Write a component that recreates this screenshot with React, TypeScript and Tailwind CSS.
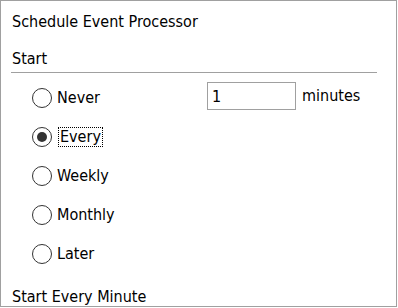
import React from 'react'

const options = ['Never', 'Every', 'Weekly', 'Monthly', 'Later']

function Radio({ checked }: { checked: boolean }) {
  return (
    <span className="flex h-[20px] w-[20px] shrink-0 items-center justify-center rounded-full border-[1.5px] border-[#333333] bg-white">
      {checked && <span className="h-[10px] w-[10px] rounded-full bg-[#333333]" />}
    </span>
  )
}

export default function App() {
  const selected = 'Every'
  return (
    <div
      className="flex h-[307px] w-[397px] flex-col overflow-hidden border border-[#a0a0a0] bg-white text-[16px] text-black"
      style={{ fontFamily: '"DejaVu Sans", sans-serif', fontStretch: 'condensed' }}
    >
      <div className="px-[11px] pt-[11px] leading-[20px]">Schedule Event Processor</div>
      <div className="px-[11px] pt-[17px] leading-[20px]">Start</div>
      <div className="ml-[10px] mr-[19px] mt-[3px] h-px shrink-0 bg-[#a0a0a0]" />
      <div className="flex pl-[31px] pt-[15px]">
        <div className="flex w-[175px] flex-col gap-[19px]">
          {options.map((o) => (
            <div key={o} className="flex h-[20px] items-center gap-[5px]">
              <Radio checked={o === selected} />
              <span
                className={
                  o === selected
                    ? 'ml-[1px] border border-dotted border-black px-[1px] leading-[18px]'
                    : 'leading-[20px]'
                }
              >
                {o}
              </span>
            </div>
          ))}
        </div>
        <div className="-mt-[6px] flex h-[28px] items-center gap-[6px]">
          <input
            value="1"
            readOnly
            className="h-[28px] w-[89px] border border-[#a0a0a0] px-[4px] text-[16px] outline-none"
            style={{ fontFamily: 'inherit', fontStretch: 'condensed' }}
          />
          <span>minutes</span>
        </div>
      </div>
      <div className="px-[11px] pt-[23px] leading-[20px]">Start Every Minute</div>
    </div>
  )
}
